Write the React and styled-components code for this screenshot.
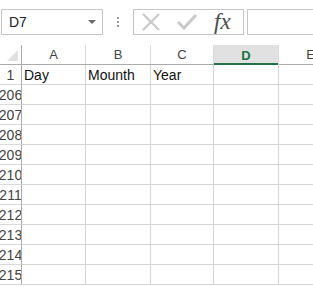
import React from 'react'
import styled, { createGlobalStyle } from 'styled-components'

const columns = [
    { label: 'A', width: 64 },
    { label: 'B', width: 65 },
    { label: 'C', width: 63 },
    { label: 'D', width: 65, selected: true },
    { label: 'E', width: 64 },
]

const rows = [
    { num: '1', cells: ['Day', 'Mounth', 'Year', '', ''] },
    ...[206, 207, 208, 209, 210, 211, 212, 213, 214, 215].map((n) => ({ num: String(n), cells: ['', '', '', '', ''] })),
]

export default function App() {
    return (
        <>
            <GlobalStyle />
            <Sheet>
                <FormulaBar>
                    <NameBox>
                        <span>D7</span>
                        <DropArrow />
                    </NameBox>
                    <Grip>
                        <i />
                        <i />
                        <i />
                    </Grip>
                    <ButtonsBox>
                        <IconSlot>
                            <svg width="22" height="20" viewBox="0 0 22 20">
                                <path d="M3 2 L19 18 M19 2 L3 18" stroke="#c9c9c9" strokeWidth="2.2" fill="none" />
                            </svg>
                        </IconSlot>
                        <IconSlot>
                            <svg width="22" height="20" viewBox="0 0 22 20">
                                <path d="M2 10 L8 16 L20 3" stroke="#c9c9c9" strokeWidth="3" fill="none" />
                            </svg>
                        </IconSlot>
                        <Fx>fx</Fx>
                    </ButtonsBox>
                    <FormulaInput />
                </FormulaBar>
                <Grid>
                    <HeaderRow>
                        <Corner>
                            <CornerTriangle />
                        </Corner>
                        {columns.map((c) => (
                            <ColHeader key={c.label} $width={c.width} $selected={c.selected}>
                                {c.label}
                            </ColHeader>
                        ))}
                    </HeaderRow>
                    {rows.map((r) => (
                        <Row key={r.num}>
                            <RowHeader>{r.num}</RowHeader>
                            {r.cells.map((v, i) => (
                                <Cell key={i} $width={columns[i].width}>
                                    {v}
                                </Cell>
                            ))}
                        </Row>
                    ))}
                </Grid>
            </Sheet>
        </>
    )
}

const GlobalStyle = createGlobalStyle`
    body {
        margin: 0;
        background: #fff;
        overflow: hidden;
        font-family: "Liberation Sans", Arial, sans-serif;
    }
`

const Sheet = styled.div`
    width: 313px;
    height: 287px;
    overflow: hidden;
    background: #fff;
`

const FormulaBar = styled.div`
    display: flex;
    align-items: center;
    height: 45px;
    padding-left: 1px;
    box-sizing: border-box;
    padding-bottom: 2px;
    > * {
        flex-shrink: 0;
    }
`

const NameBox = styled.div`
    width: 102px;
    height: 26px;
    box-sizing: border-box;
    border: 1px solid #c6c6c6;
    display: flex;
    align-items: center;
    justify-content: space-between;
    padding: 0 6px 0 7px;
    font-size: 14px;
    color: #222;
`

const DropArrow = styled.span`
    width: 0;
    height: 0;
    border-left: 4px solid transparent;
    border-right: 4px solid transparent;
    border-top: 4px solid #6b6b6b;
`

const Grip = styled.div`
    width: 30px;
    display: flex;
    flex-direction: column;
    align-items: center;
    gap: 2px;
    > i {
        width: 2px;
        height: 2px;
        background: #9a9a9a;
    }
`

const ButtonsBox = styled.div`
    width: 111px;
    height: 26px;
    box-sizing: border-box;
    border: 1px solid #c6c6c6;
    display: flex;
    align-items: center;
    padding-left: 6px;
    gap: 14px;
`

const IconSlot = styled.span`
    display: flex;
    width: 22px;
    height: 20px;
`

const Fx = styled.span`
    font-family: "Liberation Serif", "Times New Roman", serif;
    font-style: italic;
    font-size: 23px;
    color: #4a4a4a;
    line-height: 20px;
    margin-left: 2px;
`

const FormulaInput = styled.div`
    width: 80px;
    margin-left: 3px;
    height: 26px;
    box-sizing: border-box;
    border: 1px solid #c6c6c6;
    border-right: none;
`

const Grid = styled.div`
    display: flex;
    flex-direction: column;
`

const HeaderRow = styled.div`
    display: flex;
    height: 19px;
    border-bottom: 1px solid #ababab;
`

const Corner = styled.div`
    width: 22px;
    box-sizing: border-box;
    border-right: 1px solid #ababab;
    position: relative;
    flex-shrink: 0;
`

const CornerTriangle = styled.span`
    position: absolute;
    right: 3px;
    bottom: 3px;
    width: 0;
    height: 0;
    border-left: 11px solid transparent;
    border-bottom: 11px solid #dfdfdf;
`

const ColHeader = styled.div`
    width: ${(p) => p.$width}px;
    flex-shrink: 0;
    box-sizing: border-box;
    border-right: 1px solid #dadada;
    display: flex;
    align-items: center;
    justify-content: center;
    font-size: 13px;
    color: ${(p) => (p.$selected ? '#217346' : '#444')};
    font-weight: ${(p) => (p.$selected ? 700 : 400)};
    background: ${(p) => (p.$selected ? '#e1e1e1' : '#fff')};
    box-shadow: ${(p) => (p.$selected ? 'inset 0 -2px 0 #217346' : 'none')};
    margin-bottom: ${(p) => (p.$selected ? '-1px' : '0')};
`

const Row = styled.div`
    display: flex;
    height: 20px;
`

const RowHeader = styled.div`
    width: 22px;
    flex-shrink: 0;
    box-sizing: border-box;
    border-right: 1px solid #ababab;
    border-bottom: 1px solid #dadada;
    display: flex;
    align-items: center;
    justify-content: center;
    font-size: 14px;
    color: #444;
    overflow: hidden;
    white-space: nowrap;
`

const Cell = styled.div`
    width: ${(p) => p.$width}px;
    flex-shrink: 0;
    box-sizing: border-box;
    border-right: 1px solid #d4d4d4;
    border-bottom: 1px solid #d4d4d4;
    display: flex;
    align-items: center;
    padding-left: 2px;
    font-size: 14px;
    color: #111;
    white-space: nowrap;
`
